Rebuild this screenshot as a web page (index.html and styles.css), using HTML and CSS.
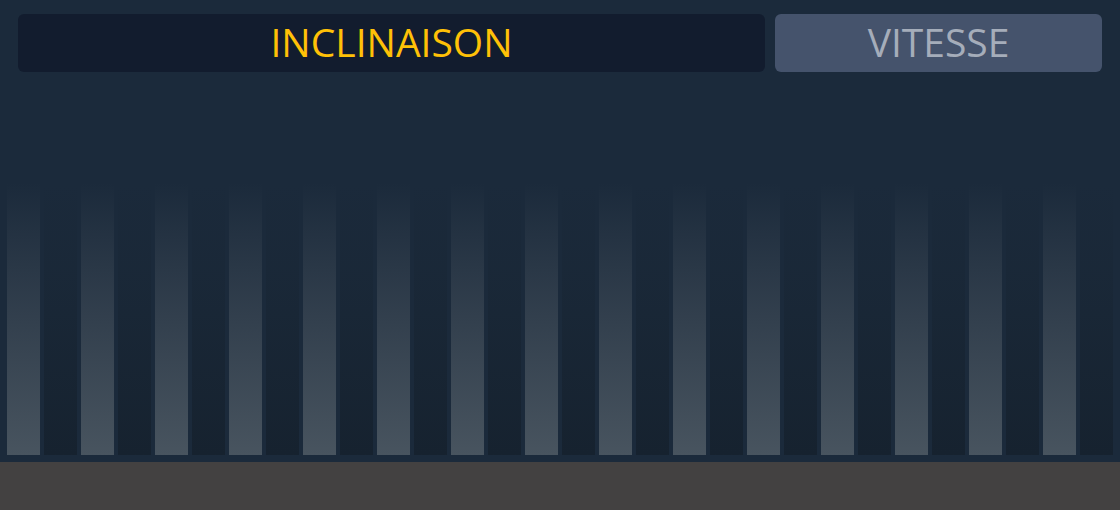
FILE: index.html
```html
<!DOCTYPE html>
<html lang="fr">
<head>
<meta charset="utf-8">
<title>Inclinaison</title>
<link rel="stylesheet" href="styles.css">
</head>
<body>
<div class="app">
  <div class="tabs">
    <div class="tab tab-active">INCLINAISON</div>
    <div class="tab tab-idle">VITESSE</div>
  </div>
  <div class="chart">
    <div class="bar light"></div><div class="bar dark"></div>
    <div class="bar light"></div><div class="bar dark"></div>
    <div class="bar light"></div><div class="bar dark"></div>
    <div class="bar light"></div><div class="bar dark"></div>
    <div class="bar light"></div><div class="bar dark"></div>
    <div class="bar light"></div><div class="bar dark"></div>
    <div class="bar light"></div><div class="bar dark"></div>
    <div class="bar light"></div><div class="bar dark"></div>
    <div class="bar light"></div><div class="bar dark"></div>
    <div class="bar light"></div><div class="bar dark"></div>
    <div class="bar light"></div><div class="bar dark"></div>
    <div class="bar light"></div><div class="bar dark"></div>
    <div class="bar light"></div><div class="bar dark"></div>
    <div class="bar light"></div><div class="bar dark"></div>
    <div class="bar light"></div><div class="bar dark"></div>
  </div>
  <div class="footer"></div>
</div>
</body>
</html>
```

FILE: styles.css
```css
* { box-sizing: border-box; }
html, body { margin: 0; padding: 0; }
body {
  width: 1120px;
  height: 510px;
  background: #434141;
  font-family: "Open Sans", "Noto Sans", sans-serif;
  overflow: hidden;
}
.app {
  display: flex;
  flex-direction: column;
  height: 510px;
}
.tabs {
  display: flex;
  gap: 10px;
  padding: 14px 18px 0 18px;
  background: #1b2a3b;
}
.tab {
  height: 58px;
  border-radius: 6px;
  display: flex;
  align-items: center;
  justify-content: center;
  padding-bottom: 3px;
  font-size: 39px;
  line-height: 1;
}
.tab-active {
  width: 747px;
  background: #121c2e;
  color: #ffc107;
}
.tab-idle {
  width: 327px;
  background: #45536c;
  color: #a5adba;
}
.chart {
  height: 390px;
  background: #1b2a3b;
  display: flex;
  align-items: flex-end;
  gap: 4px;
  padding: 0 7px 7px 7px;
}
.bar {
  flex: 1;
  height: 272px;
}
.light {
  background: linear-gradient(to bottom, rgba(74, 85, 96, 0) 0%, rgba(74, 85, 96, 0.45) 45%, #48545f 100%);
}
.dark {
  background: linear-gradient(to bottom, rgba(22, 34, 46, 0) 0%, rgba(22, 34, 46, 0.3) 40%, #16222f 100%);
}
.footer {
  flex: 1;
  background: #434141;
}
```
